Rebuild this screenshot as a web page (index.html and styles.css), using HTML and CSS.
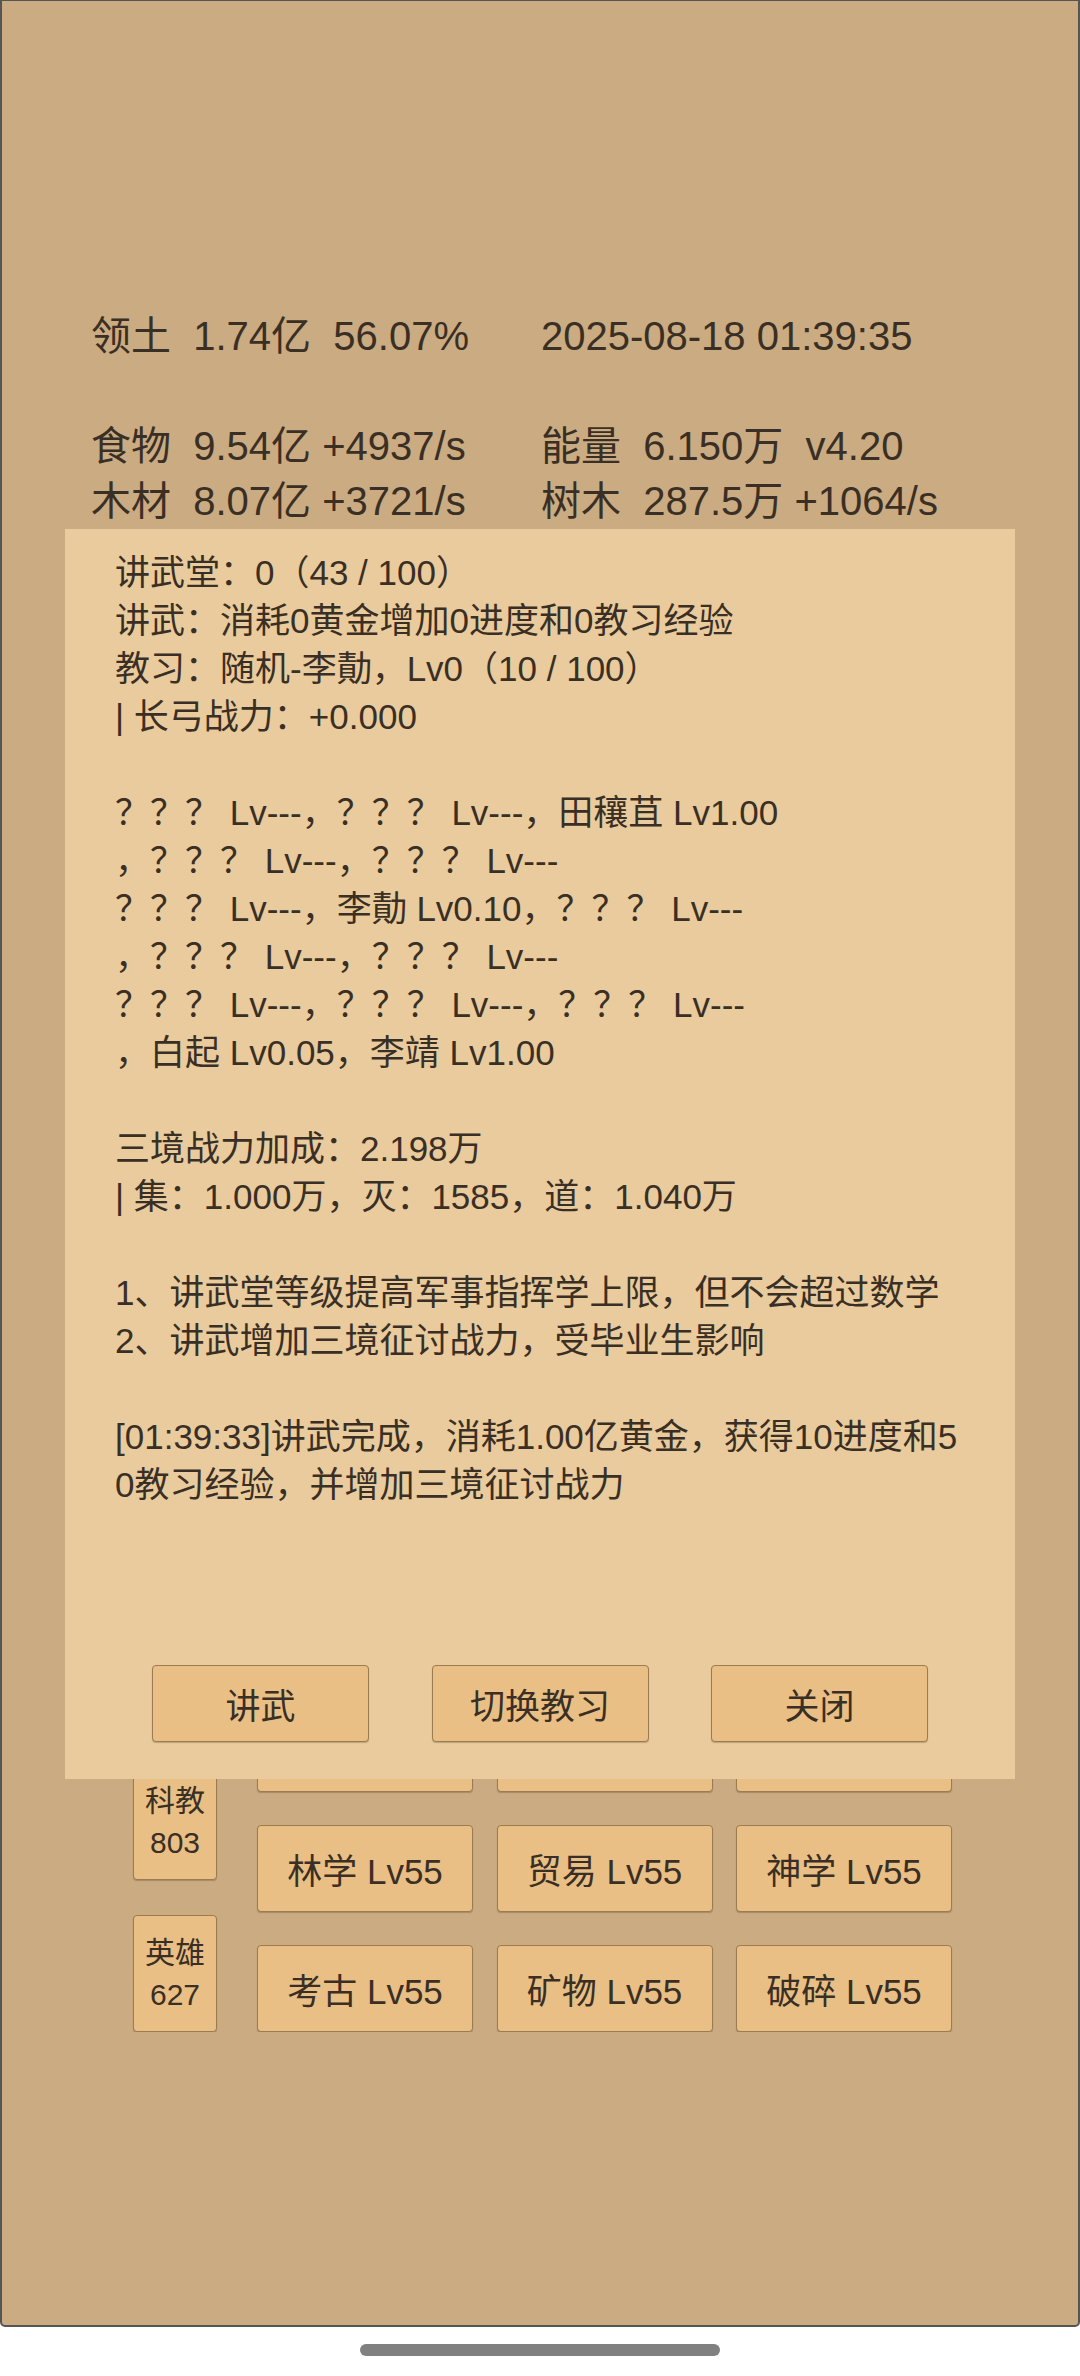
FILE: index.html
```
<!DOCTYPE html>
<html lang="zh-CN">
<head>
<meta charset="utf-8">
<title>讲武堂</title>
<link rel="stylesheet" href="styles.css">
</head>
<body>
<div class="screen">
  <div class="stats">
    <div class="cell">领土  1.74亿  56.07%</div>
    <div class="cell">2025-08-18 01:39:35</div>
    <div class="cell"></div>
    <div class="cell"></div>
    <div class="cell">食物  9.54亿 +4937/s</div>
    <div class="cell">能量  6.150万  v4.20</div>
    <div class="cell">木材  8.07亿 +3721/s</div>
    <div class="cell">树木  287.5万 +1064/s</div>
  </div>
  <div class="board">
    <div class="labels">
      <div class="label">科教<br>803</div>
      <div class="label">英雄<br>627</div>
    </div>
    <div class="grid">
      <div class="tile"></div>
      <div class="tile"></div>
      <div class="tile"></div>
      <div class="tile">林学 Lv55</div>
      <div class="tile">贸易 Lv55</div>
      <div class="tile">神学 Lv55</div>
      <div class="tile">考古 Lv55</div>
      <div class="tile">矿物 Lv55</div>
      <div class="tile">破碎 Lv55</div>
    </div>
  </div>
</div>
<div class="home-bar"></div>

<div class="modal">
  <div class="modal-text">讲武堂：0（43 / 100）
讲武：消耗0黄金增加0进度和0教习经验
教习：随机-李勣，Lv0（10 / 100）
| 长弓战力：+0.000

？？？ Lv---，？？？ Lv---，田穰苴 Lv1.00
，？？？ Lv---，？？？ Lv---
？？？ Lv---，李勣 Lv0.10，？？？ Lv---
，？？？ Lv---，？？？ Lv---
？？？ Lv---，？？？ Lv---，？？？ Lv---
，白起 Lv0.05，李靖 Lv1.00

三境战力加成：2.198万
| 集：1.000万，灭：1585，道：1.040万

1、讲武堂等级提高军事指挥学上限，但不会超过数学
2、讲武增加三境征讨战力，受毕业生影响

[01:39:33]讲武完成，消耗1.00亿黄金，获得10进度和50教习经验，并增加三境征讨战力</div>
  <div class="modal-actions">
    <div class="btn">讲武</div>
    <div class="btn">切换教习</div>
    <div class="btn">关闭</div>
  </div>
</div>
</body>
</html>
```
FILE: styles.css
```
html, body {
  margin: 0;
  padding: 0;
}
body {
  position: relative;
  width: 1080px;
  height: 2376px;
  background: #ffffff;
  font-family: "Liberation Sans", "Noto Sans CJK SC", sans-serif;
  color: #3a2f24;
  overflow: hidden;
}
.screen {
  box-sizing: border-box;
  width: 1080px;
  height: 2327px;
  background: #caab82;
  border: 2px solid #555555;
  border-top-width: 1px;
  border-radius: 0 0 5px 5px;
}
.stats {
  display: grid;
  grid-template-columns: 450px 450px;
  grid-auto-rows: 55px;
  padding: 308px 0 0 89px;
  font-size: 40px;
  line-height: 55px;
  white-space: pre;
}
.board {
  box-sizing: border-box;
  height: 1503px;
  display: flex;
  align-items: flex-end;
  padding-left: 131px;
  overflow: hidden;
}
.labels {
  display: flex;
  flex-direction: column;
  gap: 35px;
  width: 84px;
  margin-right: 40px;
}
.label, .tile, .btn {
  box-sizing: border-box;
  background: #e9bf85;
  border: 1px solid #9c7b50;
  border-radius: 4px;
  box-shadow: 0 1px 1px rgba(60, 40, 20, 0.25);
  display: flex;
  align-items: center;
  justify-content: center;
  text-align: center;
}
.label {
  height: 117px;
  font-size: 30px;
  line-height: 42px;
}
.grid {
  display: grid;
  grid-template-columns: repeat(3, 216px);
  grid-auto-rows: 87px;
  column-gap: 23.5px;
  row-gap: 33px;
}
.tile {
  font-size: 35px;
}
.home-bar {
  position: absolute;
  left: 360px;
  top: 2344px;
  width: 360px;
  height: 12px;
  border-radius: 6px;
  background: #808080;
}
.modal {
  position: absolute;
  left: 65px;
  top: 529px;
  width: 950px;
  height: 1250px;
  box-sizing: border-box;
  background: #e9cb9d;
  display: flex;
  flex-direction: column;
}
.modal-text {
  flex: 1;
  padding: 20px 50px 0 50px;
  font-size: 35px;
  line-height: 48px;
  white-space: pre-wrap;
  word-break: break-all;
}
.modal-actions {
  display: flex;
  justify-content: center;
  gap: 62.5px;
  padding-bottom: 37px;
}
.btn {
  width: 217px;
  height: 77px;
  font-size: 35px;
}
```
